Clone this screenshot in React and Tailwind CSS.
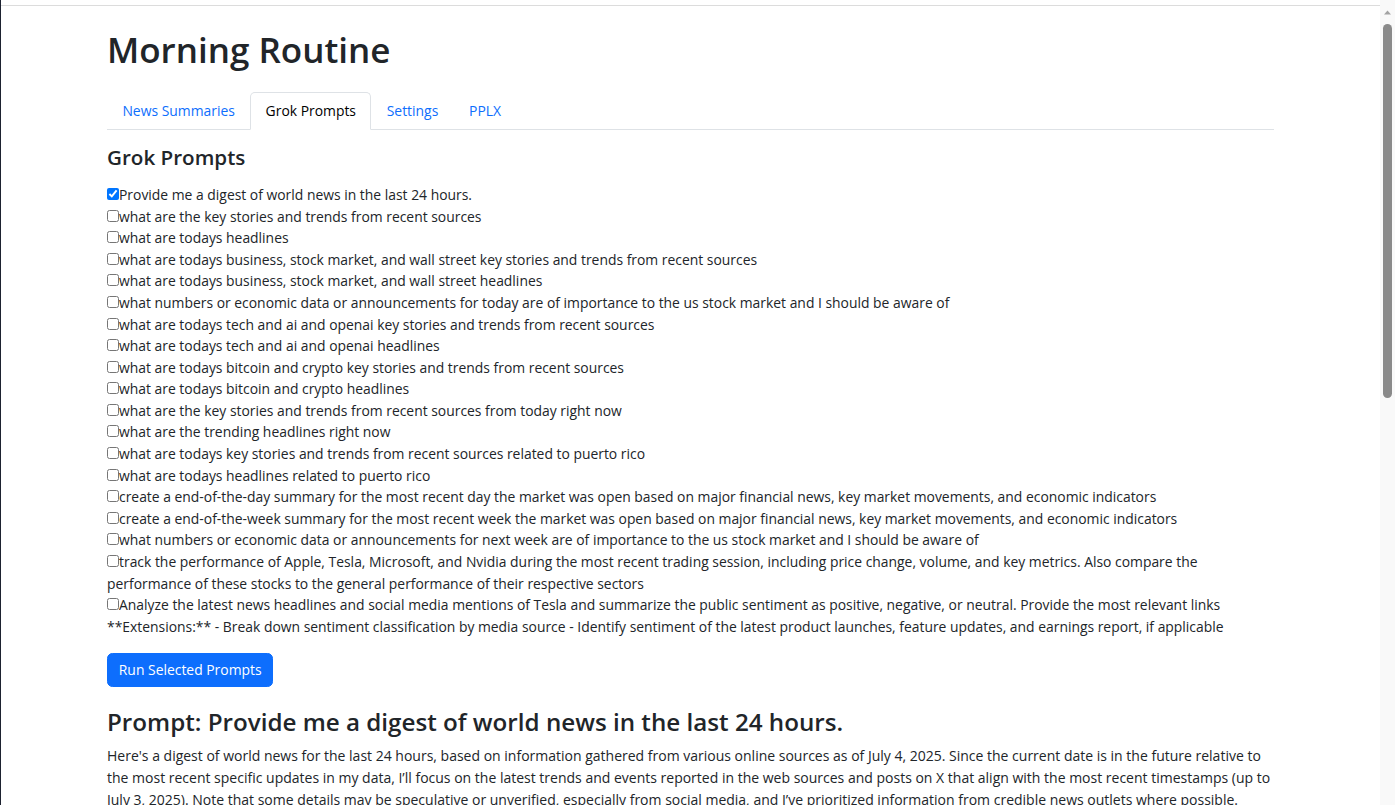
import React, { useState } from "react";

const PROMPTS = [
    ["Provide me a digest of world news in the last 24 hours."],
    ["what are the key stories and trends from recent sources"],
    ["what are todays headlines"],
    ["what are todays business, stock market, and wall street key stories and trends from recent sources"],
    ["what are todays business, stock market, and wall street headlines"],
    ["what numbers or economic data or announcements for today are of importance to the us stock market and I should be aware of"],
    ["what are todays tech and ai and openai key stories and trends from recent sources"],
    ["what are todays tech and ai and openai headlines"],
    ["what are todays bitcoin and crypto key stories and trends from recent sources"],
    ["what are todays bitcoin and crypto headlines"],
    ["what are the key stories and trends from recent sources from today right now"],
    ["what are the trending headlines right now"],
    ["what are todays key stories and trends from recent sources related to puerto rico"],
    ["what are todays headlines related to puerto rico"],
    ["create a end-of-the-day summary for the most recent day the market was open based on major financial news, key market movements, and economic indicators"],
    ["create a end-of-the-week summary for the most recent week the market was open based on major financial news, key market movements, and economic indicators"],
    ["what numbers or economic data or announcements for next week are of importance to the us stock market and I should be aware of"],
    [
        "track the performance of Apple, Tesla, Microsoft, and Nvidia during the most recent trading session, including price change, volume, and key metrics. Also compare the",
        "performance of these stocks to the general performance of their respective sectors",
    ],
    [
        "Analyze the latest news headlines and social media mentions of Tesla and summarize the public sentiment as positive, negative, or neutral. Provide the most relevant links",
        "**Extensions:** - Break down sentiment classification by media source - Identify sentiment of the latest product launches, feature updates, and earnings report, if applicable",
    ],
];

const TABS = ["News Summaries", "Grok Prompts", "Settings", "PPLX"];

const Tabs = ({ active }) => (
    <ul className="flex border-b border-[#dee2e6]">
        {TABS.map((t) => (
            <li key={t} className="-mb-px">
                <a
                    href="#"
                    className={
                        t === active
                            ? "block px-[14.4px] py-[7.2px] text-[13.9px] leading-[21.6px] border border-[#dee2e6] border-b-white rounded-t-[5px] bg-white text-[#000]"
                            : "block px-[14.4px] py-[7.2px] text-[13.9px] leading-[21.6px] border border-transparent rounded-t-[5px] text-[#0d6efd]"
                    }
                >
                    {t}
                </a>
            </li>
        ))}
    </ul>
);

const PromptList = () => {
    const [checked, setChecked] = useState([0]);

    const toggle = (i) =>
        setChecked((prev) => (prev.includes(i) ? prev.filter((x) => x !== i) : [...prev, i]));

    return (
        <div className="flex flex-col text-[13.9px] leading-[21.6px] text-[#212529] whitespace-nowrap">
            {PROMPTS.map((lines, i) => (
                <div key={i}>
                    <input
                        type="checkbox"
                        className="m-0 w-[12px] h-[12px] align-baseline"
                        checked={checked.includes(i)}
                        onChange={() => toggle(i)}
                    />
                    <label>
                        {lines[0]}
                        {lines[1] && (
                            <>
                                <br />
                                {lines[1]}
                            </>
                        )}
                    </label>
                </div>
            ))}
        </div>
    );
};

const Scrollbar = () => (
    <div className="w-[15px] shrink-0 bg-[#f9f9f9] flex flex-col items-center">
        <svg width="15" height="18" viewBox="0 0 15 18" className="shrink-0">
            <path d="M4 16 L7.5 12 L11 16 Z" fill="#a3a3a3" transform="translate(0,-1.5)" />
        </svg>
        <div className="w-[9px] h-[374px] mt-[6px] rounded-full bg-[#8a8a8a]" />
    </div>
);

export default function App() {
    return (
        <div className="h-[805px] w-full overflow-hidden flex bg-white font-['Open_Sans',sans-serif] text-[#212529]">
            <div className="w-px shrink-0 bg-[#1d2230]" />
            <div className="flex-1 flex flex-col min-w-0">
                <div className="h-[5px] shrink-0" />
                <div className="h-px shrink-0 bg-[#dcdcdc]" />
                <div className="w-[1167px] mx-auto pt-[22px]">
                    <h1 className="text-[35px] leading-[43px] font-semibold">Morning Routine</h1>

                    <div className="mt-[21px]">
                        <Tabs active="Grok Prompts" />
                    </div>

                    <h4 className="mt-[14.7px] text-[20.6px] leading-[24.6px] font-semibold">Grok Prompts</h4>

                    <div className="mt-[14.7px]">
                        <PromptList />
                    </div>

                    <button className="mt-[15.4px] px-[10.8px] py-[5.4px] border border-[#0d6efd] rounded-[5.4px] bg-[#0d6efd] text-white text-[13.9px] leading-[21.6px]">
                        Run Selected Prompts
                    </button>

                    <h3 className="mt-[20.6px] text-[24.2px] leading-[28.8px] font-semibold">
                        Prompt: Provide me a digest of world news in the last 24 hours.
                    </h3>
                    <p className="mt-[8.8px] text-[14px] leading-[21.6px] whitespace-nowrap">
                        Here's a digest of world news for the last 24 hours, based on information gathered from various online sources as of July 4, 2025. Since the current date is in the future relative to
                        <br />
                        the most recent specific updates in my data, I’ll focus on the latest trends and events reported in the web sources and posts on X that align with the most recent timestamps (up to
                        <br />
                        July 3, 2025). Note that some details may be speculative or unverified, especially from social media, and I’ve prioritized information from credible news outlets where possible.
                    </p>
                </div>
            </div>
            <Scrollbar />
        </div>
    );
}
